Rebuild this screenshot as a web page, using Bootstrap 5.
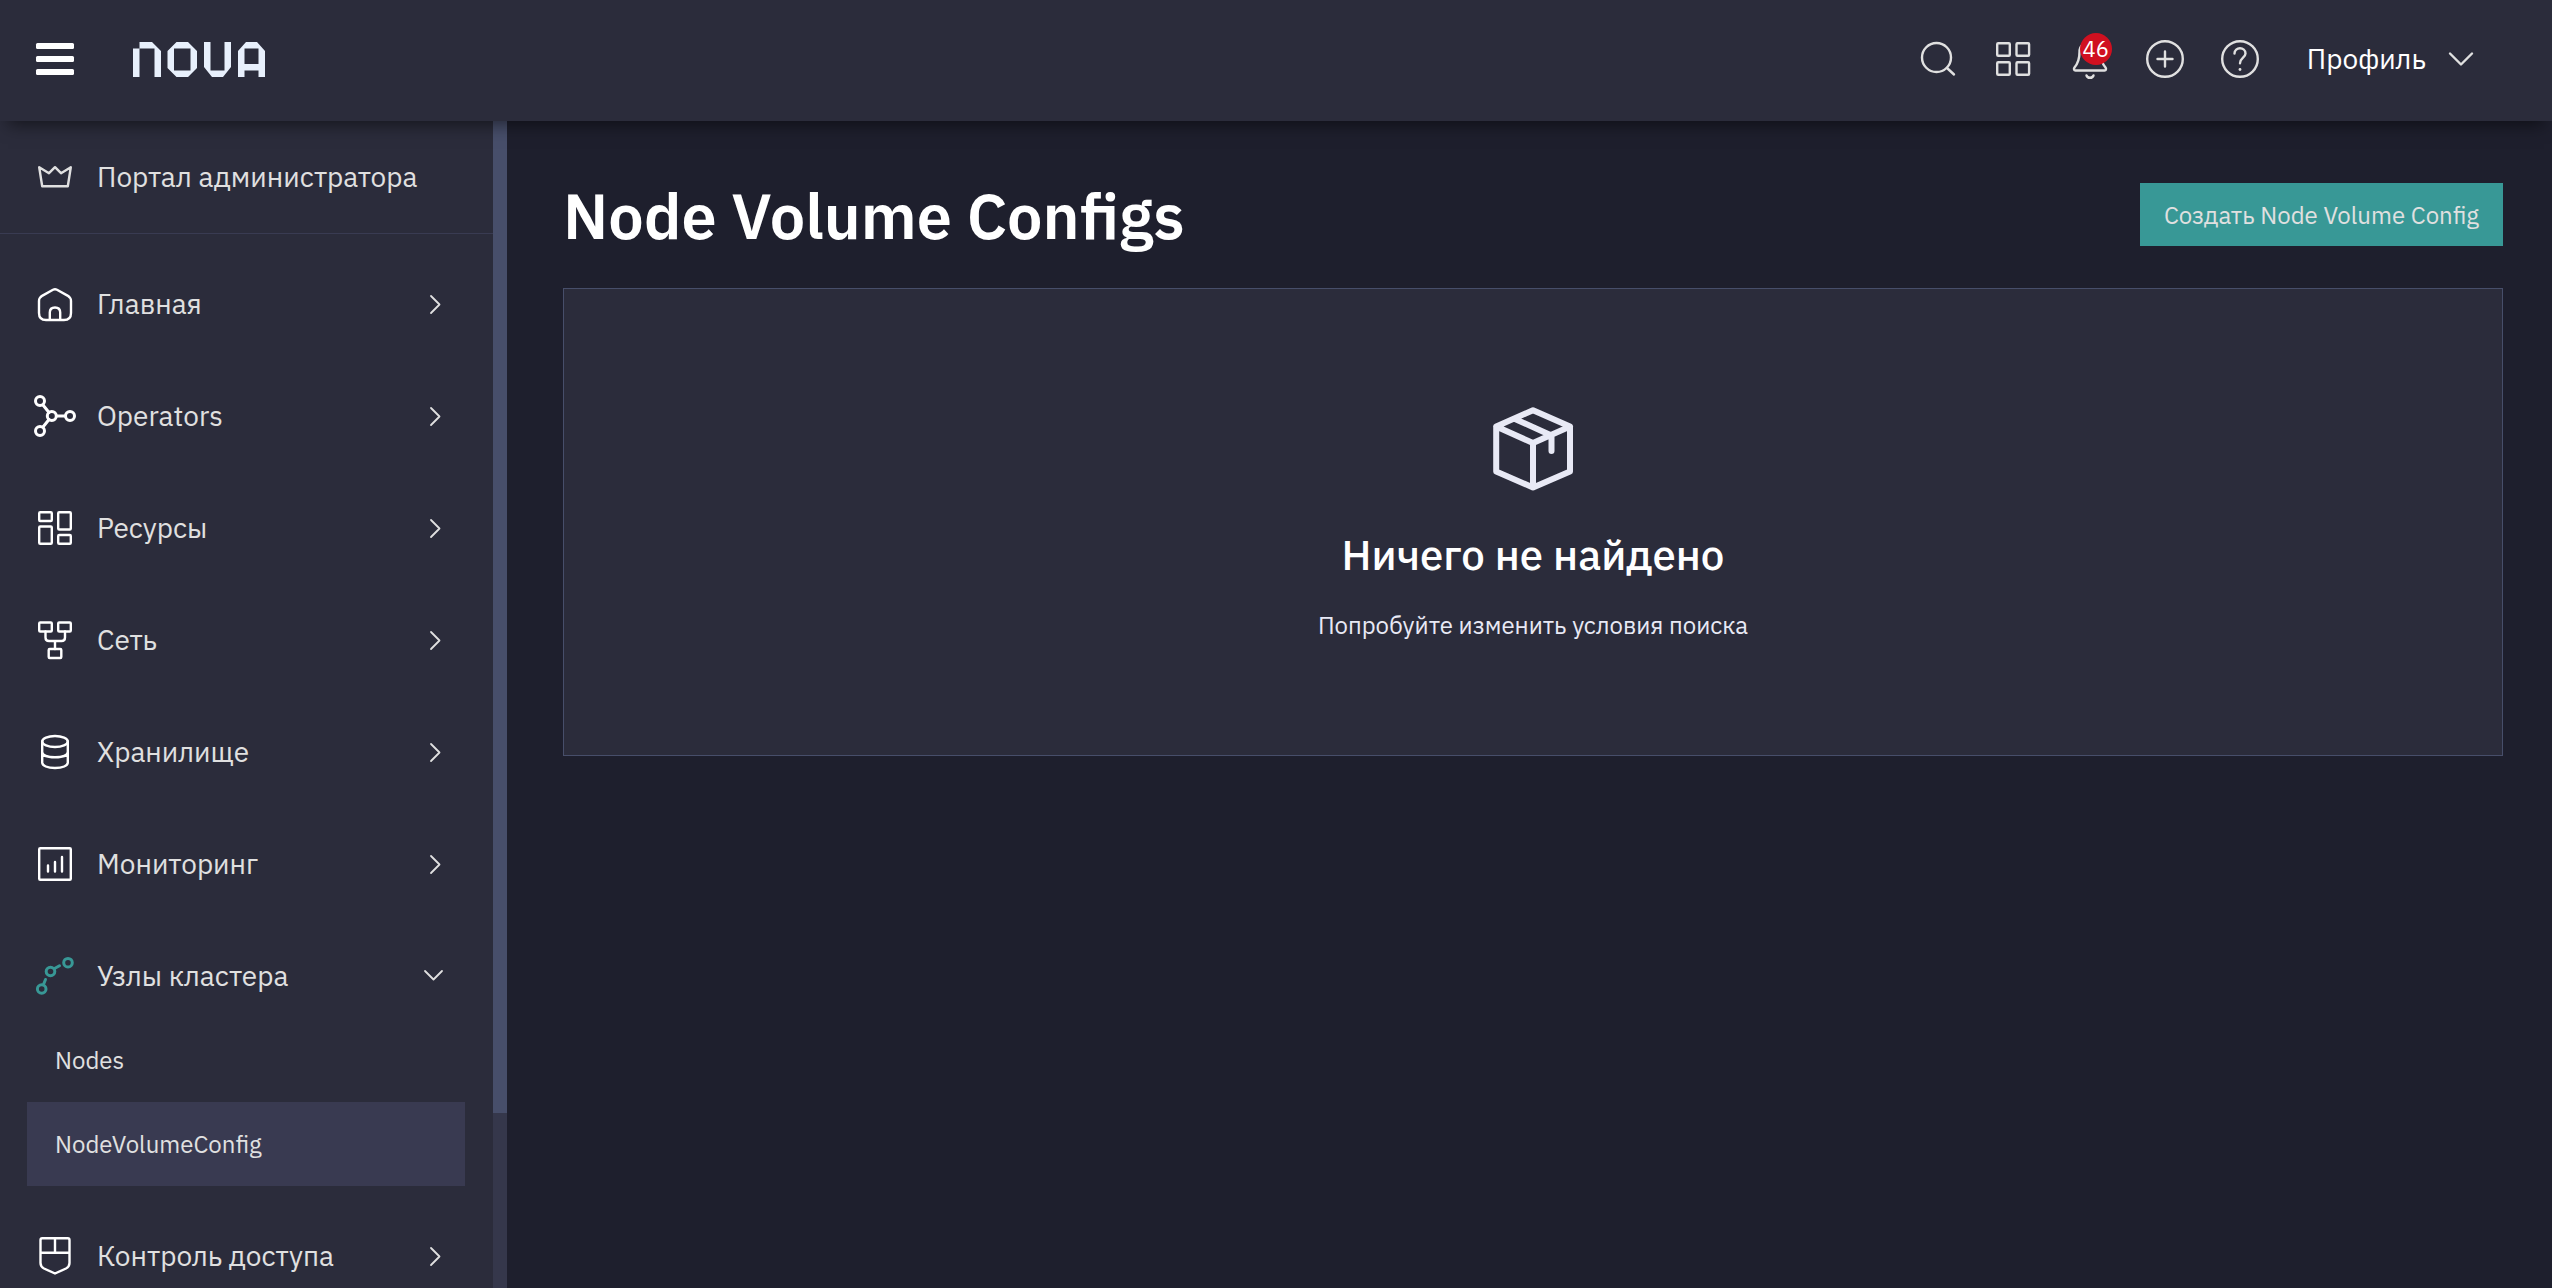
<!DOCTYPE html>
<html lang="ru" data-bs-theme="dark">
<head>
<meta charset="utf-8">
<meta name="viewport" content="width=device-width, initial-scale=1">
<title>Node Volume Configs</title>
<link href="https://cdn.jsdelivr.net/npm/bootstrap@5.3.0/dist/css/bootstrap.min.css" rel="stylesheet">
<style>
  :root { --panel: #2b2c3b; --page: #1e1f2d; --line: #474e6a; --ink: #e0e0e0; --accent: #389896; }
  body { font-family: "IBM Plex Sans", Roboto, sans-serif; font-size: 28px; line-height: 42px; background: var(--page); color: var(--ink); }
  svg { fill: none; stroke: currentColor; stroke-width: 2.4; stroke-linecap: round; stroke-linejoin: round; display: block; flex: none; }
  .ico { width: 42px; height: 42px; }
  .ico.heavy { stroke-width: 3; }
  .chev { width: 28px; height: 28px; stroke-width: 1.8; }
  .plain-btn { background: none; border: 0; padding: 0; color: inherit; }

  .topbar { background: var(--panel); height: 121px; padding: 0 70px 3px 34px; box-shadow: 0 12px 16px -8px rgba(0, 0, 0, .5); z-index: 10; }
  .menu-btn { color: #fff; }
  .logo { width: 132px; height: 35px; margin-left: 57px; fill: #e8f0fc; stroke: none; }
  .tools { gap: 33px; }
  .profile { gap: 14px; margin-left: 46px; color: #fff; }
  .profile svg { color: var(--ink); }
  .count { top: -5px; left: 11px; width: 32px; height: 32px; font-size: 22px; line-height: 32px; background: #d01020; color: #fff; }

  .side { width: 507px; background: var(--panel); }
  .track { width: 14px; background: #35374b; }
  .thumb { height: 85%; background: var(--line); }
  .portal { padding: 14px 28px 14px 34px; border-bottom: 1px solid #393b52; }
  .side-list { padding-top: 28px; }
  .side-item { height: 84px; gap: 21px; margin-bottom: 28px; padding: 0 44px 0 34px; color: var(--ink); text-decoration: none; width: 100%; text-align: left; }
  .side-item .ico { color: #fff; }
  .portal .side-item { margin: 0; padding: 0; }
  .portal .ico { color: var(--ink); }
  .side-item.open { margin-bottom: 0; }
  .side-item.open .ico { color: var(--accent); }
  .sub-list { margin: 0 28px 28px 27px; font-size: 24px; }
  .sub-link { height: 84px; padding: 0 28px; color: var(--ink); text-decoration: none; }
  .sub-link.current { background: #393a51; }

  .content-area { padding: 62px 49px 62px 56px; }
  .page-title { font-size: 63px; line-height: 64px; font-weight: 600; color: #fff; }
  .create-btn { height: 63px; padding: 0 24px; font-size: 24px; line-height: 36px; background: var(--accent); color: var(--ink); border: 0; border-radius: 0; }
  .create-btn:hover { background: #2f8583; color: #fff; }
  .empty-box { margin-top: 41px; padding: 118px 28px 112px; background: var(--panel); border: 1px solid var(--line); }
  .empty-ico { width: 84px; height: 84px; stroke-width: 6; color: #e8e9f5; }
  .empty-title { font-size: 42px; line-height: 56px; font-weight: 500; color: #fff; margin-top: 36px; }
  .empty-text { font-size: 24px; line-height: 36px; margin-top: 24px; color: #e8e9f5; }
</style>
</head>
<body class="vh-100 overflow-hidden d-flex flex-column">

<header class="topbar d-flex align-items-center position-relative flex-shrink-0">
  <button class="plain-btn menu-btn" type="button" aria-label="Меню">
    <svg class="ico" viewBox="0 0 42 42"><g fill="currentColor" stroke="none"><rect x="2" y="5" width="38" height="6" rx="1.5"/><rect x="2" y="18" width="38" height="6" rx="1.5"/><rect x="2" y="31" width="38" height="6" rx="1.5"/></g></svg>
  </button>
  <a href="#" aria-label="Nova">
    <svg class="logo" viewBox="0 0 132 35" fill-rule="evenodd">
      <path d="M0 6.5H6.5V35H0ZM6.500 0H19L28 9V35H21.500V6.500H6.500Z"/>
      <path d="M43.500 0H55L64 9V26L55 35H43.500L34.500 26V9ZM41 6.500V28.500H57.500V6.500Z"/>
      <path d="M71 0H77.500V28.500H91.500V0H98V25L90 35H79L71 25Z"/>
      <path d="M113 0H124L132 9V35H125.500V28.500H111.500V35H105V9ZM111.500 6.500V22H125.500V6.500Z"/>
    </svg>
  </a>
  <div class="tools d-flex align-items-center ms-auto">
    <button class="plain-btn" type="button" aria-label="Поиск"><svg class="ico" viewBox="0 0 42 42"><circle cx="17.500" cy="19.500" r="14.500"/><path d="M28 30L35 36.500"/></svg></button>
    <button class="plain-btn" type="button" aria-label="Приложения"><svg class="ico" viewBox="0 0 42 42"><rect x="3.200" y="5.200" width="12.600" height="12.600" rx="1"/><rect x="22.500" y="5.200" width="12.600" height="12.600" rx="1"/><rect x="3.200" y="24.200" width="12.600" height="12.600" rx="1"/><rect x="22.500" y="24.200" width="12.600" height="12.600" rx="1"/></svg></button>
    <button class="plain-btn position-relative" type="button" aria-label="Уведомления: 46">
      <svg class="ico" viewBox="0 0 42 42"><path d="M10.500 14C10.500 8 15 4 21 4S31.500 8 31.500 14C31.500 22 33.500 26 36.500 29.500C37.500 31 37 32.500 35.500 32.500H6.500C5 32.500 4.500 31 5.500 29.500C8.500 26 10.500 22 10.500 14ZM17.500 37.500C18.500 40.500 23.500 40.500 24.500 37.500"/></svg>
      <span class="count position-absolute rounded-circle text-center">46</span>
    </button>
    <button class="plain-btn" type="button" aria-label="Создать"><svg class="ico" viewBox="0 0 42 42"><circle cx="21" cy="21" r="17.800"/><path d="M21 13.500V28.500M13.500 21H28.500"/></svg></button>
    <button class="plain-btn" type="button" aria-label="Справка"><svg class="ico" viewBox="0 0 42 42"><circle cx="21" cy="21" r="17.800"/><path d="M15.500 15.500C15.500 8.500 26.500 8.500 26.500 15.500C26.500 19.500 21 20 21 25.200"/><circle cx="21" cy="31.500" r="1.400" fill="currentColor" stroke="none"/></svg></button>
  </div>
  <button class="plain-btn profile d-flex align-items-center" type="button"><span>Профиль</span><svg class="ico" viewBox="0 0 42 42"><path d="M10 15.500L21 26.500L32 15.500"/></svg></button>
</header>

<div class="d-flex flex-grow-1 overflow-hidden">
  <aside class="side d-flex flex-shrink-0">
    <nav class="flex-grow-1 overflow-hidden" aria-label="Разделы">
      <div class="portal">
        <a class="side-item d-flex align-items-center" href="#"><svg class="ico" viewBox="0 0 42 42"><path d="M5.200 11.200L8.200 30.300H33.800L36.800 11.200L27 17.200L21 11.200L15 17.200Z"/></svg><span>Портал администратора</span></a>
      </div>
      <div class="side-list">
        <button class="plain-btn side-item d-flex align-items-center" type="button"><svg class="ico" viewBox="0 0 42 42"><path d="M19 6.700Q21 5.700 23 6.700L33.500 12.600Q37 14.800 37 18V30Q37 37 30 37H12Q5 37 5 30V18Q5 14.800 8.500 12.600ZM15.800 37V29.500Q15.800 24.500 21 24.500T26.200 29.500V37"/></svg><span class="flex-grow-1">Главная</span><svg class="chev" viewBox="0 0 28 28"><path d="M10 6L18.500 14.500L10 23"/></svg></button>
        <button class="plain-btn side-item d-flex align-items-center" type="button"><svg class="ico heavy overflow-visible" viewBox="0 0 42 42"><circle cx="6" cy="6" r="4.500"/><circle cx="6" cy="36" r="4.500"/><circle cx="17.800" cy="21" r="4.500"/><circle cx="36" cy="21" r="4.500"/><path d="M9 10L15 17.500M9 32L15 24.500M22.500 21H31.500"/></svg><span class="flex-grow-1">Operators</span><svg class="chev" viewBox="0 0 28 28"><path d="M10 6L18.500 14.500L10 23"/></svg></button>
        <button class="plain-btn side-item d-flex align-items-center" type="button"><svg class="ico" viewBox="0 0 42 42"><rect x="5.200" y="5.200" width="12.600" height="8.800" rx="1"/><rect x="5.200" y="19.500" width="12.600" height="17.300" rx="1"/><rect x="24.200" y="5.200" width="12.600" height="17.300" rx="1"/><rect x="24.200" y="28" width="12.600" height="8.800" rx="1"/></svg><span class="flex-grow-1">Ресурсы</span><svg class="chev" viewBox="0 0 28 28"><path d="M10 6L18.500 14.500L10 23"/></svg></button>
        <button class="plain-btn side-item d-flex align-items-center" type="button"><svg class="ico" viewBox="0 0 42 42"><rect x="5.200" y="3.500" width="12.600" height="9" rx="1"/><rect x="24.200" y="3.500" width="12.600" height="9" rx="1"/><rect x="14.700" y="30" width="12.600" height="9" rx="1"/><path d="M11.500 12.500V18.500Q11.500 22 15 22H27.500Q31 22 31 18.500V12.500M21 22V30"/></svg><span class="flex-grow-1">Сеть</span><svg class="chev" viewBox="0 0 28 28"><path d="M10 6L18.500 14.500L10 23"/></svg></button>
        <button class="plain-btn side-item d-flex align-items-center" type="button"><svg class="ico" viewBox="0 0 42 42"><ellipse cx="21" cy="10.500" rx="12.800" ry="5.500"/><path d="M8.200 10.500V31.500C8.200 34.800 13.500 37 21 37S33.800 34.800 33.800 31.500V10.500M8.200 21C8.200 24.300 13.500 26.300 21 26.300S33.800 24.300 33.800 21"/></svg><span class="flex-grow-1">Хранилище</span><svg class="chev" viewBox="0 0 28 28"><path d="M10 6L18.500 14.500L10 23"/></svg></button>
        <button class="plain-btn side-item d-flex align-items-center" type="button"><svg class="ico" viewBox="0 0 42 42"><rect x="5.200" y="5.200" width="31.600" height="31.600" rx="1"/><path d="M14 22.500V28.500M21 19V28.500M28 14V28.500"/></svg><span class="flex-grow-1">Мониторинг</span><svg class="chev" viewBox="0 0 28 28"><path d="M10 6L18.500 14.500L10 23"/></svg></button>
        <button class="plain-btn side-item open d-flex align-items-center" type="button" aria-expanded="true"><svg class="ico heavy" viewBox="0 0 42 42"><circle cx="7.700" cy="34" r="4.300"/><circle cx="16.500" cy="16.500" r="4.300"/><circle cx="34" cy="7.700" r="4.300"/><path d="M9.500 29.500L11.500 24.500M20.500 13.500L25.500 10.700"/></svg><span class="flex-grow-1">Узлы кластера</span><svg class="chev" viewBox="0 0 28 28"><path d="M4 9L12.500 17.500L21 9"/></svg></button>
        <div class="sub-list">
          <a class="sub-link d-flex align-items-center" href="#">Nodes</a>
          <a class="sub-link current d-flex align-items-center" href="#" aria-current="page">NodeVolumeConfig</a>
        </div>
        <button class="plain-btn side-item d-flex align-items-center" type="button"><svg class="ico" viewBox="0 0 42 42"><path d="M6.500 5Q6.500 3.300 8.200 3.300H33.800Q35.500 3.300 35.500 5V28Q35.500 31.500 32 33.500L21 38.500L10 33.500Q6.500 31.500 6.500 28ZM6.500 17.800H35.500M21 3.300V17.800"/></svg><span class="flex-grow-1">Контроль доступа</span><svg class="chev" viewBox="0 0 28 28"><path d="M10 6L18.500 14.500L10 23"/></svg></button>
      </div>
    </nav>
    <div class="track"><div class="thumb"></div></div>
  </aside>

  <main class="content-area flex-grow-1 overflow-auto">
    <div class="d-flex justify-content-between align-items-start">
      <h1 class="page-title mb-0">Node Volume Configs</h1>
      <button class="btn create-btn" type="button">Создать Node Volume Config</button>
    </div>
    <section class="empty-box d-flex flex-column align-items-center text-center">
      <svg class="empty-ico" viewBox="0 0 84 84"><path d="M42 3.200L79 19.500V64.500L42 80.500L5.200 64.500V19.500ZM5.200 19.500L42 36L79 19.500M42 36V80.500M24 12L60.500 28.500V44"/></svg>
      <h2 class="empty-title mb-0">Ничего не найдено</h2>
      <p class="empty-text mb-0">Попробуйте изменить условия поиска</p>
    </section>
  </main>
</div>

<script src="https://cdn.jsdelivr.net/npm/bootstrap@5.3.0/dist/js/bootstrap.bundle.min.js"></script>
</body>
</html>
